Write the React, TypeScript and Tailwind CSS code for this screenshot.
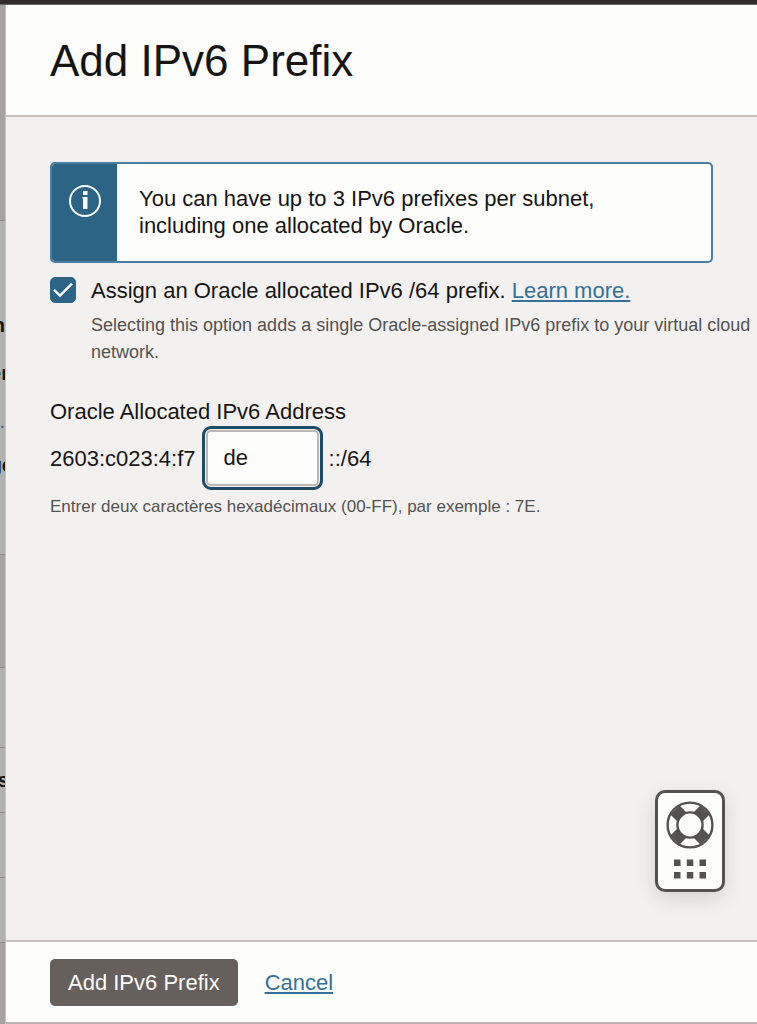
import { useState } from "react";
import type { ReactNode } from "react";

type SliceProps = {
  className: string;
  children?: ReactNode;
};

// One row of the page that stays visible behind the drawer
function Slice({ className, children }: SliceProps) {
  return (
    <div
      className={`flex w-full shrink-0 flex-col items-end overflow-hidden whitespace-nowrap border-b border-[#8c8986] text-[#161513] ${className}`}
    >
      {children}
    </div>
  );
}

function Backdrop() {
  return (
    <div
      aria-hidden="true"
      className="flex w-[6px] shrink-0 flex-col overflow-hidden border-r border-[#c9c3be] bg-[#b1b1af]"
    >
      <Slice className="h-[216px] bg-[#a5a4a3]" />
      <Slice className="h-[334px] pt-[92px]">
        <span className="text-xl font-bold leading-6">n</span>
        <span className="-mr-1 mt-6 text-xl font-bold leading-6">er</span>
        <span className="mt-6 text-xl leading-6 text-[#2c6486]">.</span>
        <span className="-mr-2 mt-5 text-xl font-bold leading-6">ge</span>
      </Slice>
      <Slice className="h-[113px] bg-[#a5a4a3]" />
      <Slice className="h-20" />
      <Slice className="h-[65px] pt-5">
        <span className="-mr-1 text-xl font-bold leading-6">es</span>
      </Slice>
      <Slice className="h-[65px]" />
      <Slice className="h-[65px]" />
      <div className="flex-1 bg-[#a5a4a3]" />
    </div>
  );
}

function InfoBanner() {
  return (
    <div
      role="note"
      className="mr-[44px] flex overflow-hidden rounded-[5px] border-2 border-[#4a7d9f] bg-[#fdfdfc]"
    >
      <div className="flex w-[65px] shrink-0 justify-center bg-[#2c6486] pt-5">
        <svg width="34" height="34" viewBox="0 0 34 34" fill="none">
          <circle cx="17" cy="17" r="15" stroke="#fdfdfc" strokeWidth="2" />
          <rect x="15" y="7" width="4.5" height="4" fill="#fdfdfc" />
          <path d="M14.5 13h5v12h-4.5v-10.5h-.5z" fill="#fdfdfc" />
        </svg>
      </div>
      <p className="px-[22px] pt-[21px] pb-[22px] text-[22px] leading-[27px]">
        You can have up to 3 IPv6 prefixes per subnet,
        <br />
        including one allocated by Oracle.
      </p>
    </div>
  );
}

function SupportButton() {
  return (
    <button
      type="button"
      aria-label="Help"
      className="fixed right-[32px] bottom-[132px] flex h-[102px] w-[70px] flex-col items-center rounded-[10px] border-3 border-[#53524f] bg-[#fdfdfc] pt-2 shadow-[0_6px_20px_rgba(0,0,0,0.13)]"
    >
      <svg width="48" height="80" viewBox="0 0 48 80" fill="none">
        <path d="M9 9l30 30M39 9l-30 30" stroke="#53524f" strokeWidth="13" />
        <circle cx="24" cy="24" r="22.4" stroke="#53524f" strokeWidth="2.4" />
        <circle cx="24" cy="24" r="12.6" fill="#fdfdfc" stroke="#53524f" strokeWidth="2.4" />
        <g fill="#53524f">
          <rect x="8" y="58.5" width="6.5" height="6.5" />
          <rect x="20.8" y="58.5" width="6.5" height="6.5" />
          <rect x="33.5" y="58.5" width="6.5" height="6.5" />
          <rect x="8" y="71" width="6.5" height="6.5" />
          <rect x="20.8" y="71" width="6.5" height="6.5" />
          <rect x="33.5" y="71" width="6.5" height="6.5" />
        </g>
      </svg>
    </button>
  );
}

export default function App() {
  const [assign, setAssign] = useState(true);
  const [hex, setHex] = useState("de");

  return (
    <div className="flex min-h-screen flex-col bg-[#f3f1f0] font-['Liberation_Sans',Arial,sans-serif] text-[22px] leading-[27px] text-[#161513]">
      <div className="h-[5px] shrink-0 border-b border-[#6b6663] bg-[#312d2a]" />

      <div className="flex flex-1">
        <Backdrop />

        <form
          onSubmit={(e) => e.preventDefault()}
          className="flex min-w-0 flex-1 flex-col border-b-2 border-[#b9b4b0]"
        >
          <header className="border-b-2 border-[#c4bfbb] bg-[#fdfdfc] px-[44px] pt-[30px] pb-[29px]">
            <h1 className="text-[44px] leading-[51px]">Add IPv6 Prefix</h1>
          </header>

          <main className="flex-1 pt-[45px] pl-[44px]">
            <InfoBanner />

            <div className="mt-[14px] flex gap-[15px]">
              <span className="relative h-[26px] w-[26px] shrink-0">
                <input
                  id="assign"
                  type="checkbox"
                  checked={assign}
                  onChange={(e) => setAssign(e.target.checked)}
                  className="block h-[26px] w-[26px] appearance-none rounded-[5px] border border-[#2c6486] bg-[#fdfdfc] checked:bg-[#2c6486]"
                />
                {assign && (
                  <svg
                    className="pointer-events-none absolute inset-0"
                    width="26"
                    height="26"
                    viewBox="0 0 26 26"
                    fill="none"
                  >
                    <path d="M4 12.8l6 5.8L22 6.6" stroke="#fdfdfc" strokeWidth="2.4" />
                  </svg>
                )}
              </span>
              <div>
                <label htmlFor="assign">Assign an Oracle allocated IPv6 /64 prefix.</label>{" "}
                <a href="#learn" className="text-[#33709a] underline underline-offset-2">
                  Learn more.
                </a>
                <p className="mt-2 text-lg leading-[27px] text-[#53524f]">
                  Selecting this option adds a single Oracle-assigned IPv6 prefix to your virtual cloud
                  network.
                </p>
              </div>
            </div>

            <label htmlFor="hex" className="mt-8 block">
              Oracle Allocated IPv6 Address
            </label>
            <div className="mt-[5px] flex items-center gap-[10px]">
              <span>2603:c023:4:f7</span>
              <input
                id="hex"
                type="text"
                maxLength={2}
                value={hex}
                onChange={(e) => setHex(e.target.value)}
                className="h-[56px] w-[113px] rounded-[5px] border-2 border-[#bdb7b3] bg-[#fdfdfc] px-4 outline-3 outline-offset-1 outline-[#1e4b66]"
              />
              <span>::/64</span>
            </div>
            <p className="mt-[7px] text-[17px] text-[#53524f]">
              Entrer deux caractères hexadécimaux (00-FF), par exemple : 7E.
            </p>
          </main>

          <footer className="flex items-center gap-[27px] border-t-2 border-[#c4bfbb] bg-[#fdfdfc] px-[44px] pt-[17px] pb-[16px]">
            <button
              type="submit"
              className="rounded-[5px] bg-[#665f5b] px-[18px] py-[10px] text-[#fdfdfc]"
            >
              Add IPv6 Prefix
            </button>
            <a href="#cancel" className="text-[#33709a] underline underline-offset-2">
              Cancel
            </a>
          </footer>
        </form>
      </div>

      <SupportButton />
    </div>
  );
}
